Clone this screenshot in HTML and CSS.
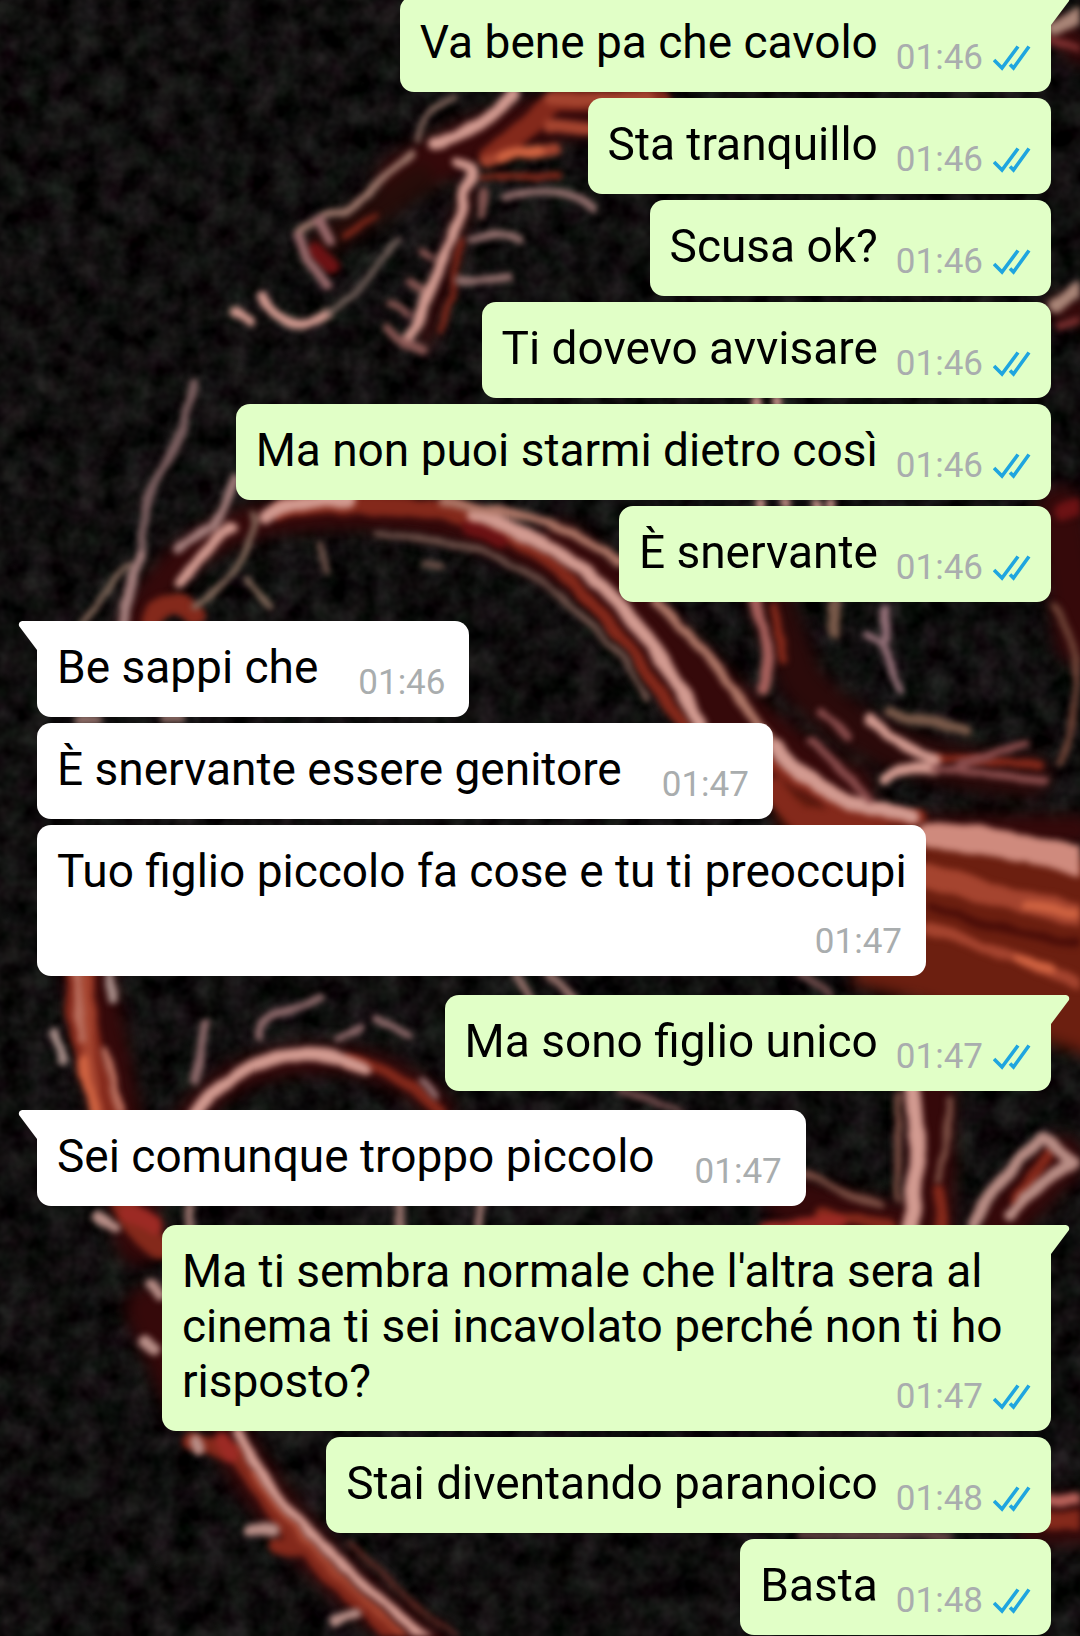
FILE: index.html
```html
<!DOCTYPE html>
<html lang="it">
<head>
    <meta charset="UTF-8">
    <meta name="viewport" content="width=device-width, initial-scale=1.0">
    <title>Chat</title>
    <link rel="stylesheet" href="styles.css">
</head>
<body>

    <!-- Wallpaper: red dragon on black -->
    <svg class="wallpaper" viewBox="0 0 1080 1636" preserveAspectRatio="xMidYMin slice" aria-hidden="true">
        <defs>
            <filter id="soft" x="0" y="0" width="1080" height="1636" filterUnits="userSpaceOnUse" color-interpolation-filters="sRGB">
                <feTurbulence type="fractalNoise" baseFrequency="0.03" numOctaves="2" seed="7" result="n"/>
                <feDisplacementMap in="SourceGraphic" in2="n" scale="9" xChannelSelector="R" yChannelSelector="G"/>
                <feGaussianBlur stdDeviation="3"/>
            </filter>
            <filter id="glow" x="0" y="0" width="1080" height="1636" filterUnits="userSpaceOnUse" color-interpolation-filters="sRGB">
                <feGaussianBlur stdDeviation="8"/>
            </filter>
            <filter id="grain" x="0" y="0" width="100%" height="100%" color-interpolation-filters="sRGB">
                <feTurbulence type="fractalNoise" baseFrequency="0.04" numOctaves="3" seed="4"/>
                <feColorMatrix type="matrix" values="0.2 0.06 0 0 -0.07  0.2 0 0.04 0 -0.065  0.2 0.03 0 0 -0.06  0 0 0 0 1"/>
            </filter>
        </defs>
        <rect width="1080" height="1636" filter="url(#grain)"/>

        <!-- dark red shading -->
        <g filter="url(#glow)" fill="none" stroke="#35090a" stroke-linecap="round">
            <path stroke-width="50" d="M640 110C540 110 460 140 400 180"/>
            <path stroke-width="30" stroke="#260c09" d="M420 180L320 245"/>
            <path stroke-width="16" d="M470 190L425 340"/>
            <path stroke-width="34" d="M130 640C160 560 220 520 300 515C450 500 560 550 640 640C700 730 760 790 900 830"/>
            <path stroke-width="50" d="M560 545C660 620 740 740 850 790"/>
            <path stroke-width="44" stroke="#2b0a0a" d="M770 600L800 680C850 740 930 770 1030 775"/>
            <path stroke-width="50" d="M90 980L115 1110L140 1240M150 1310L190 1400"/>
            <path stroke-width="30" d="M190 1120C230 1050 370 1030 440 1110"/>
            <path stroke-width="44" d="M230 1440C290 1540 360 1600 430 1650"/>
            <path stroke-width="50" d="M930 1090L930 1230M790 1200L900 1230M1000 1220L1060 1160"/>
            <path stroke-width="50" d="M1040 1520H1080M1060 510L1080 640"/>
            <path stroke-width="30" d="M1060 30L1080 50M1060 310H1080M920 830H1080"/>
        </g>
        <path filter="url(#glow)" fill="#6c1f10" d="M770 770C830 820 900 830 1100 860V1060C1010 1030 930 1000 850 985L900 850L780 830Z"/>

        <!-- red body parts -->
        <g filter="url(#soft)" fill="none" stroke-linecap="round">
            <g stroke="#84291b">
                <path stroke-width="22" d="M660 100H560C540 110 520 140 490 155"/>
                <path stroke-width="6" d="M480 176H560M345 235L375 215M450 300L462 240M440 330L448 300"/>
                <path stroke-width="12" d="M300 505C420 500 500 520 560 570C620 630 660 690 690 735"/>
                <path stroke-width="18" d="M280 512C340 498 420 505 470 515"/>
                <path stroke-width="20" d="M150 620C160 600 180 600 195 615"/>
                <path stroke-width="16" d="M765 760C830 800 860 830 920 815"/>
                <path stroke-width="22" d="M775 790L800 820H880"/>
                <path stroke-width="8" d="M775 605L784 660M935 758L1040 765"/>
                <path stroke-width="30" d="M80 975C80 1040 95 1080 110 1120"/>
                <path stroke-width="24" d="M125 1205C133 1228 150 1240 160 1248"/>
                <path stroke-width="16" d="M190 1440L235 1455M235 1450C270 1520 330 1580 410 1650M275 1545L310 1550M375 1620L400 1640"/>
                <path stroke-width="12" d="M1015 1200L1050 1155M940 1190V1230M820 1215L890 1225"/>
                <path stroke-width="18" d="M1050 1520H1090"/>
                <path stroke-width="12" d="M350 1060C380 1062 400 1080 440 1110"/>
            </g>
            <g stroke="#a5442f">
                <path stroke-width="24" d="M925 875C980 890 1030 905 1090 918"/>
                <path stroke-width="12" d="M930 930C980 945 1030 960 1080 985"/>
                <path stroke-width="12" d="M485 160L556 148M550 100L650 98M550 125L590 130"/>
                <path stroke-width="14" d="M84 980L88 1060L96 1110"/>
                <path stroke-width="8" d="M255 1475C300 1540 350 1590 410 1640"/>
            </g>
            <path stroke="#cf6240" stroke-width="10" d="M82 1060L94 1110M1025 905L1085 915M1020 960L1050 968M500 158L540 150"/>
            <path stroke="#9c2a24" stroke-width="16" d="M128 1212L155 1225M222 1442L232 1455M765 1232L840 1222"/>
            <path stroke="#6c1214" stroke-width="16" d="M470 527L500 540M315 250L330 265M1060 510L1085 505"/>
            <path stroke="#4a0d08" stroke-width="8" d="M930 908C980 925 1030 935 1085 945M860 840L920 860"/>
        </g>

        <!-- light edges -->
        <g filter="url(#soft)" fill="none" stroke="#d29a90" stroke-linecap="round" stroke-linejoin="round">
            <path stroke-width="12" d="M513 93C495 115 470 133 435 143"/>
            <path stroke-width="6" stroke="#85685f" d="M455 97C430 108 420 120 418 140"/>
            <path stroke-width="7" stroke="#a07a6e" d="M412 153C385 175 365 200 345 213C320 216 300 225 297 237"/>
            <path stroke-width="10" stroke="#9a6a6c" d="M298 237L308 260L328 284M318 222L330 240"/>
            <path stroke-width="10" d="M234 313L250 322M262 296C270 315 285 325 299 325C310 325 320 320 328 313"/>
            <path stroke-width="6" stroke="#71605a" d="M328 313C362 290 385 260 400 240"/>
            <path stroke-width="11" d="M459 163C475 165 476 175 464 190C458 230 440 270 408 340"/>
            <path stroke-width="8" stroke="#8a5855" d="M391 303L406 315M410 280L420 290M424 250L432 256M387 328L404 345L425 350M484 190L480 215"/>
            <path stroke-width="8" stroke="#93706e" d="M505 197C540 186 570 190 593 207M471 240C490 232 505 232 520 240M459 280L509 277"/>
            <path stroke-width="9" stroke="#7d6061" d="M194 382C188 430 165 460 147 500L139 560"/>
            <path stroke-width="10" stroke="#a57f7d" d="M139 555C133 580 128 600 122 625M236 478L215 525L176 547"/>
            <path stroke-width="6" stroke="#8a6f60" d="M128 565L80 625M252 510C255 560 225 585 195 607M248 580L270 607"/>
            <path stroke-width="11" d="M231 527C210 545 192 565 181 583"/>
            <path stroke-width="14" d="M264 515C285 505 315 500 350 500"/>
            <path stroke-width="14" d="M475 515C540 535 590 570 615 600C655 645 675 680 700 725"/>
            <path stroke-width="9" stroke="#b07868" d="M442 503C540 510 590 540 620 562M655 600C690 630 720 675 750 713L778 750"/>
            <path stroke-width="6" stroke="#72554d" d="M375 535C460 535 510 560 540 580C590 620 620 650 648 697M320 545L327 573M425 565H440"/>
            <path stroke-width="15" d="M775 747C800 780 840 808 912 815"/>
            <path stroke-width="11" d="M869 720C885 735 905 752 935 760M885 780C890 768 910 768 935 770"/>
            <path stroke-width="8" stroke="#8a4d4d" d="M935 768L1044 780M960 765L1025 745M820 712L850 735M812 740L870 800"/>
            <path stroke-width="12" stroke="#a8605c" d="M755 600C758 620 768 640 770 655L762 690"/>
            <path stroke-width="11" stroke="#7a5a4a" d="M834 603V633M889 713L965 730"/>
            <path stroke-width="8" stroke="#99747c" d="M866 635L881 645L901 690M886 610V640"/>
            <path stroke-width="7" stroke="#6f4437" d="M1054 607C1080 640 1085 710 1060 763"/>
            <path stroke-width="28" stroke="#cf8a7d" d="M930 835C980 838 1030 848 1095 865"/>
            <path stroke-width="8" stroke="#ba6f5e" d="M75 970L82 1040M105 1050L120 1110"/>
            <path stroke-width="9" stroke="#a98f8a" d="M112 975V1000M54 1030L62 1062"/>
            <path stroke-width="13" d="M195 1112C220 1082 250 1066 275 1058C310 1052 340 1055 365 1070"/>
            <path stroke-width="8" stroke="#8f6b6c" d="M258 1036C262 1010 295 1015 320 998M338 1040L360 1028M205 1020L197 1080M376 1020L410 1035M420 1082L435 1095"/>
            <path stroke-width="11" stroke="#b98f88" d="M98 1215L115 1228M153 1285L160 1295M143 1340L155 1350M250 1530L275 1530M335 1622L355 1615M195 1440L200 1450"/>
            <path stroke-width="10" d="M238 1432C270 1500 340 1570 430 1640"/>
            <path stroke-width="5" stroke="#5e2a24" d="M350 1545C400 1590 430 1620 470 1645"/>
            <path stroke-width="16" d="M912 1085C920 1130 918 1180 910 1230"/>
            <path stroke-width="7" stroke="#7d5045" d="M898 1095V1200M950 1100L940 1180M803 1173L880 1207"/>
            <path stroke-width="12" stroke="#b98d85" d="M973 1225C990 1190 1010 1165 1043 1138M1010 1215C1030 1190 1045 1180 1073 1162M1043 1138L1073 1162"/>
            <path stroke-width="12" stroke="#b8625a" d="M1045 1500H1090"/>
            <path stroke-width="14" stroke="#a98577" d="M1055 28L1090 10M1055 305L1090 284"/>
            <path stroke-width="8" stroke="#7d3030" d="M1050 40L1090 50M1058 325L1080 318"/>
            <path stroke-width="10" d="M755 400V404M778 400V404M815 503V504M760 503V504M785 503V504M830 503V504"/>
            <path stroke-width="9" stroke="#93706a" d="M515 975L530 1000M550 975L575 1000M400 1204V1228M480 1204V1228M190 1204V1228M80 720H100M165 720H180"/>
            <path stroke-width="7" stroke="#6e4a4a" d="M800 975L830 995M620 1090L680 1112M800 1535H950"/>
        </g>
    </svg>

    <!-- Double tick used by every sent message -->
    <svg class="symbols" aria-hidden="true">
        <symbol id="ticks" viewBox="0 0 38 26">
            <path d="M1 15L9 23L25 1.5M17 19.5L20.5 23L36 1.5" fill="none" stroke="#1fa5df" stroke-width="3.6" stroke-linejoin="miter"/>
        </symbol>
    </svg>

    <main class="chat">
        <div class="message sent first">
            Va bene pa che cavolo
            <span class="meta"><time>01:46</time><svg class="ticks"><use href="#ticks"/></svg></span>
        </div>
        <div class="message sent">
            Sta tranquillo
            <span class="meta"><time>01:46</time><svg class="ticks"><use href="#ticks"/></svg></span>
        </div>
        <div class="message sent">
            Scusa ok?
            <span class="meta"><time>01:46</time><svg class="ticks"><use href="#ticks"/></svg></span>
        </div>
        <div class="message sent">
            Ti dovevo avvisare
            <span class="meta"><time>01:46</time><svg class="ticks"><use href="#ticks"/></svg></span>
        </div>
        <div class="message sent">
            Ma non puoi starmi dietro così
            <span class="meta"><time>01:46</time><svg class="ticks"><use href="#ticks"/></svg></span>
        </div>
        <div class="message sent">
            È snervante
            <span class="meta"><time>01:46</time><svg class="ticks"><use href="#ticks"/></svg></span>
        </div>

        <div class="message received first">
            Be sappi che
            <span class="meta"><time>01:46</time></span>
        </div>
        <div class="message received">
            È snervante essere genitore
            <span class="meta"><time>01:47</time></span>
        </div>
        <div class="message received">
            Tuo figlio piccolo fa cose e tu ti preoccupi
            <span class="meta"><time>01:47</time></span>
        </div>

        <div class="message sent first">
            Ma sono figlio unico
            <span class="meta"><time>01:47</time><svg class="ticks"><use href="#ticks"/></svg></span>
        </div>

        <div class="message received first">
            Sei comunque troppo piccolo
            <span class="meta"><time>01:47</time></span>
        </div>

        <div class="message sent first">
            Ma ti sembra normale che l'altra sera al cinema ti sei incavolato perché non ti ho risposto?
            <span class="meta"><time>01:47</time><svg class="ticks"><use href="#ticks"/></svg></span>
        </div>
        <div class="message sent">
            Stai diventando paranoico
            <span class="meta"><time>01:48</time><svg class="ticks"><use href="#ticks"/></svg></span>
        </div>
        <div class="message sent">
            Basta
            <span class="meta"><time>01:48</time><svg class="ticks"><use href="#ticks"/></svg></span>
        </div>
    </main>

</body>
</html>
```
FILE: styles.css
```css
:root {
    --sent: #e1ffc7;
    --received: #ffffff;
    --text: #000000;
    --time: #a9adae;
    --background: #0c0b0b;
}

* {
    box-sizing: border-box;
    margin: 0;
    padding: 0;
}

body {
    font-family: Roboto, 'Noto Sans', sans-serif;
    background-color: var(--background);
    color: var(--text);
    overflow-x: hidden;
}

.wallpaper {
    position: fixed;
    top: 0;
    left: 0;
    width: 100%;
    height: 100%;
    z-index: -1;
}

.symbols {
    display: none;
}

.chat {
    display: flex;
    flex-direction: column;
    gap: 6px;
    padding: 0 29px 0 37px;
}

.message {
    display: flow-root;
    position: relative;
    max-width: calc(100% - 125px);
    padding: 19px 20px 14px;
    border-radius: 14px;
    font-size: 46px;
    line-height: 55px;
}

.sent {
    align-self: flex-end;
    background: var(--sent);
}

.received {
    align-self: flex-start;
    padding-right: 16px;
    background: var(--received);
}

/* first message of a group gets the tail and some extra space */
.first {
    margin-top: 13px;
}

.first:first-child {
    margin-top: -4px;
}

.sent.first {
    border-top-right-radius: 0;
}

.received.first {
    border-top-left-radius: 0;
}

.first::before {
    content: "";
    position: absolute;
    top: 0;
    width: 20px;
    height: 30px;
    background: inherit;
}

.sent.first::before {
    left: calc(100% - 1px);
    clip-path: path("M0 0H16Q20 1 19 5L1 29H0Z");
}

.received.first::before {
    right: calc(100% - 1px);
    clip-path: path("M20 0H4Q0 1 1 5L19 29H20Z");
}

/* floats next to the last line, or drops below it when there is no room */
.meta {
    float: right;
    display: flex;
    align-items: center;
    gap: 10px;
    margin: 22px 0 0 18px;
    font-size: 35px;
    line-height: 41px;
    color: var(--time);
}

.received .meta {
    margin-left: 40px;
    margin-right: 8px;
}

.ticks {
    width: 38px;
    height: 26px;
}
```
